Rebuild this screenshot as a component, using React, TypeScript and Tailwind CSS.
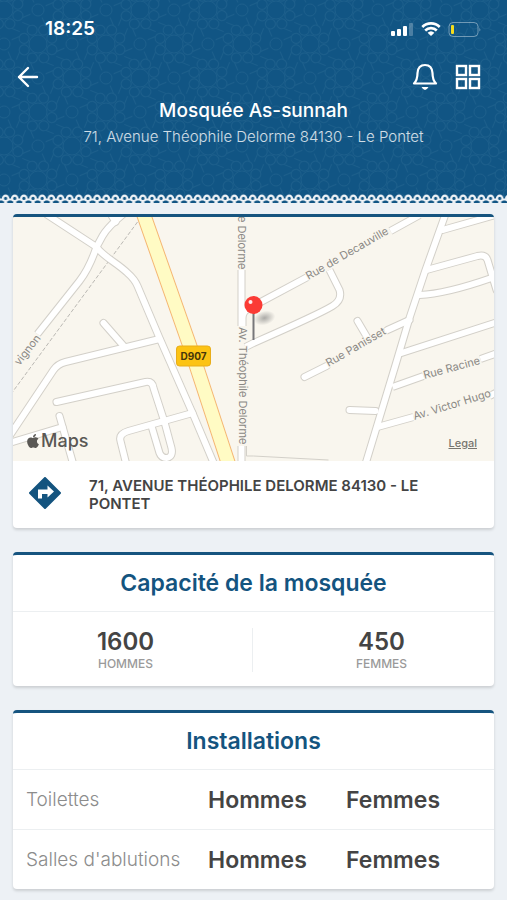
import type { ReactNode } from 'react';
import { FaApple } from 'react-icons/fa';

type Road = { d: string; cap?: 'round' | 'butt' };

const ROADS: Road[] = [
  { d: 'M48 215 L97 247 C104 257 118 263 128 273 Q135 279 138 286 L160 338 L193 413 L215 465' },
  { d: 'M124 214 Q108 227 103 236 L97 247 Q90 268 80 281 L38 334', cap: 'butt' },
  { d: 'M110 212 L116 222' },
  { d: 'M104 323 L125 347' },
  { d: 'M160 339 L66 362 Q58 364 54 370 L10 436' },
  { d: 'M57 402 L146 382 Q153 381 154 388 L165 422 L172 448 Q174 457 167 458 Q162 458 160 453 L152 426' },
  { d: 'M193 413 L129 431 Q119 434 121 441 L127 465' },
  { d: 'M60 416 L74 465' },
  { d: 'M10 443 L63 427' },
  { d: 'M242 270 V326', cap: 'butt' },
  { d: 'M242 446 V465', cap: 'butt' },
  { d: 'M243 326 V318 Q243 311 250 308 L308 277', cap: 'butt' },
  { d: 'M391 231 L420 215', cap: 'butt' },
  { d: 'M330 270 L340 290 Q343 300 333 306 Q320 314 254 343 L246 347', cap: 'butt' },
  { d: 'M446 214 L426 270 L410 318 L396 365 L366 464' },
  { d: 'M443 230 L496 215' },
  { d: 'M427 270 L478 256 Q486 254 488 260 L497 290' },
  { d: 'M420 295 Q446 294 492 278' },
  { d: 'M402 353 L498 322' },
  { d: 'M393 387 L424 376', cap: 'butt' },
  { d: 'M481 359 L498 353', cap: 'butt' },
  { d: 'M378 427 L414 417', cap: 'butt' },
  { d: 'M490 396 L498 392', cap: 'butt' },
  { d: 'M350 410 L376 411' },
  { d: 'M305 377 L327 366' },
  { d: 'M388 330 L410 320' },
  { d: 'M358 321 L368 338' },
];

const STREETS = [
  { name: 'Rue de Decauville', x: 309, y: 280, angle: -30 },
  { name: 'Rue Panisset', x: 329, y: 367, angle: -30 },
  { name: 'Rue Racine', x: 425, y: 379, angle: -15 },
  { name: 'Av. Victor Hugo', x: 415, y: 420, angle: -17 },
  { name: 'Av. Théophile Delorme', x: 239, y: 327, angle: 90 },
  { name: 'e Delorme', x: 238, y: 216, angle: 90 },
  { name: 'vignon', x: 20, y: 366, angle: -52 },
];

const CAPACITES = [
  { label: 'Hommes', value: 1600 },
  { label: 'Femmes', value: 450 },
];

const INSTALLATIONS = ['Toilettes', "Salles d'ablutions"];

function HeaderPattern() {
  return (
    <svg className="absolute inset-0 h-full w-full" aria-hidden="true">
      <defs>
        <pattern id="stars" width="68" height="68" x="4" y="10" patternUnits="userSpaceOnUse">
          <g fill="none" stroke="#2d6d96" strokeWidth="1" opacity="0.4">
            {[[0, 0], [68, 0], [0, 68], [68, 68], [34, 34]].map(([x, y]) => (
              <g key={`${x}-${y}`}>
                <circle cx={x} cy={y} r="9" />
                {[0, 45, 90, 135, 180, 225, 270, 315].map((a) => (
                  <g key={a} transform={`rotate(${a + 22} ${x} ${y})`}>
                    <circle cx={x + 15} cy={y} r="5" />
                    <path d={`M${x + 20} ${y} L${x + 26} ${y - 6}`} />
                  </g>
                ))}
              </g>
            ))}
            <circle cx="34" cy="0" r="6" />
            <circle cx="0" cy="34" r="6" />
            <circle cx="34" cy="68" r="6" />
            <circle cx="68" cy="34" r="6" />
          </g>
        </pattern>
      </defs>
      <rect width="100%" height="100%" fill="url(#stars)" />
    </svg>
  );
}

function Lace() {
  return (
    <svg className="absolute inset-x-0 bottom-0 h-[9px] w-full" aria-hidden="true">
      <defs>
        <pattern id="lace" width="9.15" height="9" x="1" patternUnits="userSpaceOnUse">
          <path d="M0 5.5 H9.15" stroke="#eef2f6" strokeWidth="2" />
          <circle cx="4.6" cy="4.4" r="2.7" fill="#125684" stroke="#eef2f6" strokeWidth="2.2" />
          <path d="M3 8.5 H6.2" stroke="#eef2f6" strokeWidth="1" />
        </pattern>
      </defs>
      <rect width="100%" height="9" fill="url(#lace)" />
    </svg>
  );
}

function StatusBar() {
  return (
    <div className="flex items-center justify-between pr-[26px] pl-[45px] pt-[17px]">
      <span className="text-[19px] leading-6 font-semibold">18:25</span>
      <svg width="91" height="18" viewBox="390 19 91 18" aria-hidden="true">
        <g fill="#fff">
          <rect x="391" y="30" width="4" height="5" rx="1" />
          <rect x="397" y="28" width="4" height="7" rx="1" />
          <rect x="403" y="25" width="4" height="10" rx="1" />
          <rect x="409" y="22" width="4" height="13" rx="1" opacity="0.25" />
          <path d="M431 35 L427.6 31.8 A5 5 0 0 1 434.4 31.8 Z" />
        </g>
        <g fill="none" stroke="#fff" strokeWidth="2.6">
          <path d="M422.3 26 A12.3 12.3 0 0 1 439.7 26" />
          <path d="M425.2 29.5 A8.3 8.3 0 0 1 436.8 29.5" />
        </g>
        <rect x="449" y="21.5" width="29" height="14" rx="4" fill="none" stroke="#fff" strokeOpacity="0.4" />
        <path d="M479.5 26.5 Q481 28.5 479.5 30.5 Z" fill="#fff" opacity="0.5" />
        <rect x="451" y="24" width="3" height="9" rx="1" fill="#f5dc1d" />
      </svg>
    </div>
  );
}

function Map() {
  return (
    <svg
      className="block h-[244px] w-full"
      viewBox="13 217 482 244"
      preserveAspectRatio="xMidYMid slice"
      fontFamily="Inter, sans-serif"
      role="img"
      aria-label="Plan du quartier de la mosquée"
    >
      <defs>
        <radialGradient id="shadow">
          <stop offset="0" stopColor="#777" stopOpacity="0.6" />
          <stop offset="1" stopColor="#777" stopOpacity="0" />
        </radialGradient>
      </defs>
      <rect x="13" y="217" width="482" height="244" fill="#f9f6ee" />
      <path d="M138 222 L13 392" stroke="#bab8b3" strokeWidth="1" strokeDasharray="4 2" />
      <path d="M247 446 V456 L254 456 L329 460" fill="none" stroke="#d3d0c9" />
      {ROADS.map(({ d, cap = 'round' }) => (
        <path key={d} d={d} fill="none" stroke="#d3d0c9" strokeWidth="8" strokeLinecap={cap} strokeLinejoin="round" />
      ))}
      {ROADS.map(({ d, cap = 'round' }) => (
        <path key={d} d={d} fill="none" stroke="#fff" strokeWidth="6" strokeLinecap={cap} strokeLinejoin="round" />
      ))}
      <path d="M144 214 L190 345 L229 464" fill="none" stroke="#f5b774" strokeWidth="15" />
      <path d="M144 214 L190 345 L229 464" fill="none" stroke="#fffbc4" strokeWidth="13" />
      <g fontSize="11" fill="#8a8884" stroke="#f9f6ee" strokeWidth="2" paintOrder="stroke">
        {STREETS.map((s) => (
          <text key={s.name} transform={`translate(${s.x} ${s.y}) rotate(${s.angle})`}>
            {s.name}
          </text>
        ))}
      </g>
      <rect x="177" y="346" width="34" height="20" rx="3" fill="#fcc314" stroke="#e8ad1a" />
      <text x="194" y="360" fontSize="10" fontWeight="700" textAnchor="middle" fill="#46360a">D907</text>
      <ellipse cx="265" cy="318" rx="11" ry="7" fill="url(#shadow)" transform="rotate(-15 265 318)" />
      <path d="M254 312 V340" stroke="#77777a" strokeWidth="2" />
      <circle cx="254" cy="305" r="9" fill="#fb3b35" />
      <circle cx="251" cy="302" r="2" fill="#fff" opacity="0.9" />
    </svg>
  );
}

function Card({ children }: { children: ReactNode }) {
  return (
    <section className="overflow-hidden rounded-[4px] border-t-[3px] border-[#16547f] bg-white shadow-[0_2px_3px_rgba(0,0,0,0.14)]">
      {children}
    </section>
  );
}

function CardTitle({ children }: { children: ReactNode }) {
  return (
    <h2 className="border-b border-[#eceff1] py-[14px] text-center text-[23px] leading-7 font-semibold text-[#14547f]">
      {children}
    </h2>
  );
}

export default function App() {
  return (
    <div className="min-h-screen bg-[#edf1f5] font-['Inter',sans-serif] text-[#444]">
      <header className="relative h-[203px] bg-[#115584] text-white">
        <HeaderPattern />
        <Lace />
        <div className="relative">
          <StatusBar />
          <div className="flex items-center justify-between pt-[18px] pr-[25px] pl-[16px]">
            <button type="button" aria-label="Retour">
              <svg width="24" height="36" viewBox="0 0 24 36" fill="none" stroke="#fff" strokeWidth="2.4" strokeLinecap="round" strokeLinejoin="round">
                <path d="M12 9 L3 18 L12 27 M3 18 H21" />
              </svg>
            </button>
            <div className="flex items-center gap-4">
              <button type="button" aria-label="Notifications">
                <svg width="28" height="36" viewBox="411 59 28 36" fill="none" stroke="#fff" strokeWidth="2.2" strokeLinejoin="round">
                  <path d="M414 83.5 Q417.5 80 417.5 73 Q418 65 425 65 Q432 65 432.5 73 Q432.5 80 436 83.5 Z" />
                  <path d="M421.5 87 Q425 93 428.5 87 Z" fill="#fff" stroke="none" />
                </svg>
              </button>
              <button type="button" aria-label="Menu">
                <svg width="27" height="36" viewBox="455 59 27 36" fill="none" stroke="#fff" strokeWidth="2.4">
                  <rect x="457" y="66" width="9" height="9" />
                  <rect x="470" y="66" width="9" height="9" />
                  <rect x="457" y="79" width="9" height="9" />
                  <rect x="470" y="79" width="9" height="9" />
                </svg>
              </button>
            </div>
          </div>
          <h1 className="mt-1 text-center text-[19px] leading-6 font-medium">Mosquée As-sunnah</h1>
          <p className="mt-1 text-center text-[15px] leading-5 font-light text-white/80">
            71, Avenue Théophile Delorme 84130 - Le Pontet
          </p>
        </div>
      </header>

      <main className="flex flex-col gap-6 px-[13px] pt-[11px] pb-[11px]">
        <Card>
          <div className="relative">
            <Map />
            <span className="absolute bottom-2 left-3 flex items-center text-[18px] leading-6 font-medium text-[#5a5854]">
              <FaApple className="size-4" />
              Maps
            </span>
            <a href="#legal" className="absolute right-[17px] bottom-2 text-[11px] leading-5 font-medium text-[#77756f] underline">
              Legal
            </a>
          </div>
          <div className="flex items-start pt-4 pr-12 pb-[15px] pl-[15px]">
            <svg className="shrink-0" width="34" height="34" viewBox="0 0 34 34" aria-hidden="true">
              <path d="M17 1 L32 16 L17 31 L2 16 Z" fill="#14547f" stroke="#14547f" strokeWidth="2" strokeLinejoin="round" />
              <path d="M10 21.500 V12.500 H19.500 V8.500 L26 14.500 L19.500 20.500 V17 H14 V21.500 Z" fill="#fff" />
            </svg>
            <p className="ml-[27px] text-[15px] leading-[18px] font-semibold uppercase">
              71, Avenue Théophile Delorme 84130 - Le Pontet
            </p>
          </div>
        </Card>

        <Card>
          <CardTitle>Capacité de la mosquée</CardTitle>
          <dl className="flex divide-x divide-[#eceff1] pt-4 pb-[14px]">
            {CAPACITES.map((c) => (
              <div key={c.label} className="flex h-[44px] flex-1 flex-col-reverse items-center first:pr-[14px] last:pl-4">
                <dt className="text-[12px] leading-4 font-medium text-[#9a9a9a] uppercase">{c.label}</dt>
                <dd className="text-[24px] leading-7 font-semibold">{c.value}</dd>
              </div>
            ))}
          </dl>
        </Card>

        <Card>
          <CardTitle>Installations</CardTitle>
          <table className="w-full table-fixed">
            <tbody className="divide-y divide-[#eceff1]">
              {INSTALLATIONS.map((nom) => (
                <tr key={nom} className="h-[59px] text-left last:h-[60px]">
                  <th scope="row" className="w-[195px] pt-0.5 pl-[13px] text-[19px] font-light text-[#8c8c8c]">{nom}</th>
                  <td className="w-[138px] pt-0.5 text-[23px] font-semibold">Hommes</td>
                  <td className="pt-0.5 text-[23px] font-semibold">Femmes</td>
                </tr>
              ))}
            </tbody>
          </table>
        </Card>
      </main>
    </div>
  );
}
